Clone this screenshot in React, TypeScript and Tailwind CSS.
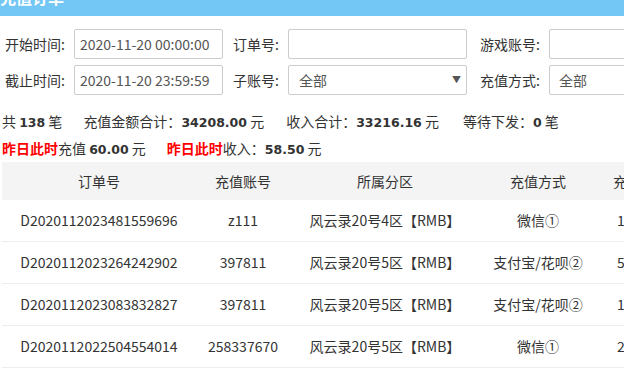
import React from "react";

const rows = [
  { id: "D2020112023481559696", acc: "z111", zone: "风云录20号4区【RMB】", pay: "微信①", amt: "10.00" },
  { id: "D2020112023264242902", acc: "397811", zone: "风云录20号5区【RMB】", pay: "支付宝/花呗②", amt: "50.00" },
  { id: "D2020112023083832827", acc: "397811", zone: "风云录20号5区【RMB】", pay: "支付宝/花呗②", amt: "100.00" },
  { id: "D2020112022504554014", acc: "258337670", zone: "风云录20号5区【RMB】", pay: "微信①", amt: "200.00" },
];

const numCls = "font-bold text-[12.5px] [font-family:'DejaVu_Sans',sans-serif]";

export default function App() {
  return (
    <div className="w-[624px] h-[369px] overflow-hidden bg-white text-[#333] text-[14px] [font-family:'Noto_Sans_CJK_SC','Noto_Sans',sans-serif]">
      <div className="h-[16px] bg-[#72c7f4] overflow-hidden">
        <div className="-mt-[11px] text-[16px] leading-[16px] font-bold text-white whitespace-nowrap">充值订单</div>
      </div>

      <div className="mt-[13px] flex flex-col gap-[6px] whitespace-nowrap">
        <div className="flex items-center h-[30px]">
          <div className="w-[74px] shrink-0 pl-[5px]">开始时间:</div>
          <div className="w-[149px] h-[30px] shrink-0 border border-[#ccc] rounded-[2px] flex items-center pl-[5px] text-[#555]">2020-11-20 00:00:00</div>
          <div className="w-[65px] shrink-0 pl-[10px]">订单号:</div>
          <div className="w-[179px] h-[30px] shrink-0 border border-[#ccc] rounded-[2px]"></div>
          <div className="w-[82px] shrink-0 pl-[13px]">游戏账号:</div>
          <div className="w-[179px] h-[30px] shrink-0 border border-[#ccc] rounded-[2px]"></div>
        </div>
        <div className="flex items-center h-[30px]">
          <div className="w-[74px] shrink-0 pl-[5px]">截止时间:</div>
          <div className="w-[149px] h-[30px] shrink-0 border border-[#ccc] rounded-[2px] flex items-center pl-[5px] text-[#555]">2020-11-20 23:59:59</div>
          <div className="w-[65px] shrink-0 pl-[10px]">子账号:</div>
          <div className="w-[179px] h-[30px] shrink-0 border border-[#ccc] rounded-[2px] flex items-center justify-between pl-[10px] pr-[5px] text-[#555]">
            <span>全部</span>
            <span className="text-[9px] text-[#555]">▼</span>
          </div>
          <div className="w-[82px] shrink-0 pl-[13px]">充值方式:</div>
          <div className="w-[179px] h-[30px] shrink-0 border border-[#ccc] rounded-[2px] flex items-center pl-[9px] text-[#555]">全部</div>
        </div>
      </div>

      <div className="pt-[13px] pl-[2px] whitespace-nowrap">
        <div className="flex items-center h-[27px] gap-[21px]">
          <span>共 <b className={numCls}>138</b> 笔</span>
          <span>充值金额合计：<b className={numCls}>34208.00</b> 元</span>
          <span className="ml-[1px]">收入合计：<b className={numCls}>33216.16</b> 元</span>
          <span className="ml-[3px]">等待下发：<b className={numCls}>0</b> 笔</span>
        </div>
        <div className="flex items-center h-[27px] gap-[21px]">
          <span><b className="text-[#f00]">昨日此时</b>充值 <b className={numCls}>60.00</b> 元</span>
          <span><b className="text-[#f00]">昨日此时</b>收入：<b className={numCls}>58.50</b> 元</span>
        </div>
      </div>

      <div className="ml-[2px] w-[700px] whitespace-nowrap">
        <div className="flex h-[38px] items-center bg-[#f4f4f4]">
          <div className="w-[194px] shrink-0 text-center">订单号</div>
          <div className="w-[94px] shrink-0 text-center">充值账号</div>
          <div className="w-[190px] shrink-0 text-center">所属分区</div>
          <div className="w-[116px] shrink-0 text-center">充值方式</div>
          <div className="w-[90px] shrink-0 text-center">充值金额</div>
        </div>
        {rows.map((r) => (
          <div key={r.id} className="flex h-[42px] items-center border-b border-[#eee]">
            <div className="w-[194px] shrink-0 text-center">{r.id}</div>
            <div className="w-[94px] shrink-0 text-center">{r.acc}</div>
            <div className="w-[190px] shrink-0 text-center">{r.zone}</div>
            <div className="w-[116px] shrink-0 text-center">{r.pay}</div>
            <div className="w-[90px] shrink-0 pl-[21px]">{r.amt}</div>
          </div>
        ))}
      </div>
    </div>
  );
}
